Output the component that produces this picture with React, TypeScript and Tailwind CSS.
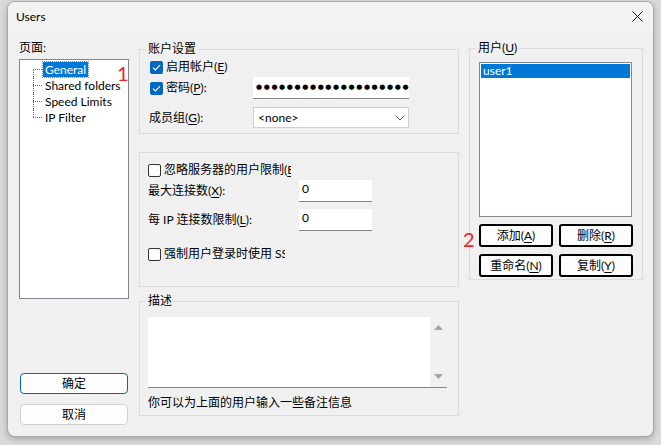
import React from "react"

const pages = ["General", "Shared folders", "Speed Limits", "IP Filter"]

// 助记键，比如 (E)
function Key({ k }: { k: string }) {
  return (
    <>
      (<span className="underline underline-offset-2">{k}</span>)
    </>
  )
}

function Check({ checked }: { checked?: boolean }) {
  if (checked) {
    return (
      <span className="flex h-[13px] w-[13px] shrink-0 items-center justify-center rounded-[2px] bg-[#0067c0]">
        <svg width="9" height="7" viewBox="0 0 9 7">
          <path d="M1 3.6 L3.4 6 L8 1.2" stroke="white" strokeWidth="1.1" fill="none" />
        </svg>
      </span>
    )
  }
  return <span className="h-[13px] w-[13px] shrink-0 rounded-[2px] border border-[#333] bg-white" />
}

function Btn({ children }: { children: React.ReactNode }) {
  return (
    <button className="flex h-[23px] items-center justify-center rounded-[3px] border-2 border-black bg-[#fdfdfd] leading-[14px]">
      {children}
    </button>
  )
}

export default function App() {
  return (
    <div className="h-[445px] w-[661px] bg-[#dadada] pl-[7px] pt-[1px] text-[12px] text-black font-['Segoe_UI',Lato,'Noto_Sans_CJK_SC',sans-serif]">
      <div className="flex h-[436px] w-[647px] flex-col overflow-hidden rounded-[8px] border border-[#a9a9a9] bg-[#f0f0f0] shadow-[0_2px_6px_rgba(0,0,0,0.25)]">
        {/* 标题栏 */}
        <div className="flex h-[29px] shrink-0 items-center justify-between bg-[#f3f2f1] pl-[8px] pr-[10px]">
          <span className="leading-[14px]">Users</span>
          <svg width="11" height="11" viewBox="0 0 11 11">
            <path d="M0.5 0.5 L10.5 10.5 M10.5 0.5 L0.5 10.5" stroke="#1a1a1a" strokeWidth="1" />
          </svg>
        </div>

        <div className="flex items-start pl-[11px]">
          {/* 左栏 */}
          <div className="flex w-[110px] flex-col">
            <span className="mt-[10px] leading-[14px]">页面:</span>
            <div className="relative mt-[4px] h-[240px] border border-[#828790] bg-white pt-[1px]">
              {pages.map((p, i) => (
                <div key={p} className="flex h-[16px] items-stretch">
                  <div className="ml-[13px] flex w-[9px] flex-col">
                    <div className={i === 0 ? "h-[8px]" : "h-[8px] border-l border-dotted border-[#6d6d6d]"} />
                    <div
                      className={
                        i === pages.length - 1
                          ? "h-[8px] border-t border-dotted border-[#6d6d6d]"
                          : "h-[8px] border-l border-t border-dotted border-[#6d6d6d]"
                      }
                    />
                  </div>
                  <span
                    className={
                      i === 0
                        ? "ml-[1px] h-[15px] self-center bg-[#0078d7] px-[2px] leading-[15px] text-white outline-1 outline-dotted outline-[#c98a00]"
                        : "ml-[1px] h-[15px] self-center px-[2px] leading-[15px]"
                    }
                  >
                    {p}
                  </span>
                </div>
              ))}
              <span className="absolute left-[97px] top-[3px] text-[20px] leading-[20px] text-[#e8262b] font-[Lato,sans-serif]">
                1
              </span>
            </div>
            <button className="ml-[1px] mt-[74px] flex h-[21px] w-[108px] items-center justify-center rounded-[4px] border border-[#0067c0] bg-[#fdfdfd] leading-[14px]">
              确定
            </button>
            <button className="ml-[1px] mt-[10px] flex h-[21px] w-[108px] items-center justify-center rounded-[4px] border border-[#d1d1d1] bg-[#fdfdfd] leading-[14px]">
              取消
            </button>
          </div>

          {/* 中栏 */}
          <div className="ml-[10px] flex w-[320px] flex-col">
            <fieldset className="mt-[11px] border border-[#dcdcdc]">
              <legend className="ml-[6px] px-[2px] leading-[14px]">账户设置</legend>
              <div className="flex flex-col pb-[5px] pl-[9px]">
                <div className="mt-[4px] flex h-[14px] items-center gap-[3px] pl-[1px] leading-[14px]">
                  <Check checked />
                  <span>
                    启用帐户<Key k="E" />
                  </span>
                </div>
                <div className="mt-[3px] grid h-[22px] grid-cols-[104px_156px] items-center">
                  <div className="flex items-center gap-[3px] pl-[1px] leading-[14px]">
                    <Check checked />
                    <span>
                      密码<Key k="P" />:
                    </span>
                  </div>
                  <div className="flex h-[22px] items-center overflow-hidden whitespace-nowrap border-b border-[#858585] bg-white pl-[3px] text-[7px] tracking-[1.6px] font-['DejaVu_Sans',sans-serif]">
                    ●●●●●●●●●●●●●●●●●●●●●●●●
                  </div>
                </div>
                <div className="mt-[8px] grid h-[21px] grid-cols-[104px_156px] items-center">
                  <span className="leading-[14px]">
                    成员组<Key k="G" />:
                  </span>
                  <div className="flex h-[21px] items-center justify-between border border-[#cfcfcf] bg-white pl-[4px] pr-[3px] leading-[14px]">
                    <span>&lt;none&gt;</span>
                    <svg width="10" height="6" viewBox="0 0 10 6">
                      <path d="M0.5 0.5 L5 5 L9.5 0.5" stroke="#606060" strokeWidth="1" fill="none" />
                    </svg>
                  </div>
                </div>
              </div>
            </fieldset>

            <div className="mt-[18px] flex flex-col border border-[#dcdcdc] pb-[25px] pl-[8px] pt-[10px]">
              <div className="flex h-[14px] w-[143px] items-center gap-[3px] overflow-hidden whitespace-nowrap leading-[14px]">
                <Check />
                <span>
                  忽略服务器的用户限制<Key k="B" />
                </span>
              </div>
              <div className="mt-[3px] grid h-[22px] grid-cols-[151px_73px] items-center">
                <span className="leading-[14px]">
                  最大连接数<Key k="X" />:
                </span>
                <div className="flex h-[22px] items-start border-b border-[#858585] bg-white pl-[3px] pt-[2px] leading-[14px]">0</div>
              </div>
              <div className="mt-[7px] grid h-[22px] grid-cols-[151px_73px] items-center">
                <span className="leading-[14px]">
                  每 IP 连接数限制<Key k="L" />:
                </span>
                <div className="flex h-[22px] items-start border-b border-[#858585] bg-white pl-[3px] pt-[2px] leading-[14px]">0</div>
              </div>
              <div className="mt-[16px] flex h-[14px] w-[137px] items-center gap-[3px] overflow-hidden whitespace-nowrap leading-[14px]">
                <Check />
                <span>强制用户登录时使用 SSL</span>
              </div>
            </div>

            <fieldset className="mt-[7px] border border-[#dcdcdc]">
              <legend className="ml-[6px] px-[2px] leading-[14px]">描述</legend>
              <div className="flex flex-col pb-[5px] pl-[8px]">
                <div className="mt-[9px] flex h-[71px] w-[299px] border-b border-[#858585] bg-white">
                  <div className="flex-1" />
                  <div className="flex w-[17px] flex-col items-center justify-between bg-[#f0f0f0] py-[8px]">
                    <svg width="9" height="5" viewBox="0 0 9 5">
                      <path d="M0 5 L4.5 0 L9 5 Z" fill="#a3a3a3" />
                    </svg>
                    <svg width="9" height="5" viewBox="0 0 9 5">
                      <path d="M0 0 L9 0 L4.5 5 Z" fill="#a3a3a3" />
                    </svg>
                  </div>
                </div>
                <span className="mt-[8px] leading-[14px]">你可以为上面的用户输入一些备注信息</span>
              </div>
            </fieldset>
          </div>

          {/* 右栏 */}
          <div className="ml-[10px] w-[174px]">
            <fieldset className="relative mt-[10px] border border-[#dcdcdc]">
              <legend className="ml-[6px] px-[2px] leading-[14px]">
                用户<Key k="U" />
              </legend>
              <div className="flex flex-col pb-[2px] pl-[9px]">
                <div className="mt-[7px] h-[155px] w-[153px] border border-[#828790] bg-white p-[1px]">
                  <div className="h-[14px] bg-[#0078d7] pl-[2px] leading-[14px] text-white">user1</div>
                </div>
                <div className="mt-[7px] grid w-[154px] grid-cols-2 gap-x-[6px] gap-y-[7px]">
                  <Btn>
                    添加<Key k="A" />
                  </Btn>
                  <Btn>
                    删除<Key k="R" />
                  </Btn>
                  <Btn>
                    重命名<Key k="N" />
                  </Btn>
                  <Btn>
                    复制<Key k="Y" />
                  </Btn>
                </div>
              </div>
              <span className="absolute left-[-7px] top-[174px] text-[20px] leading-[20px] text-[#e8262b] font-[Lato,sans-serif]">
                2
              </span>
            </fieldset>
          </div>
        </div>
      </div>
    </div>
  )
}
